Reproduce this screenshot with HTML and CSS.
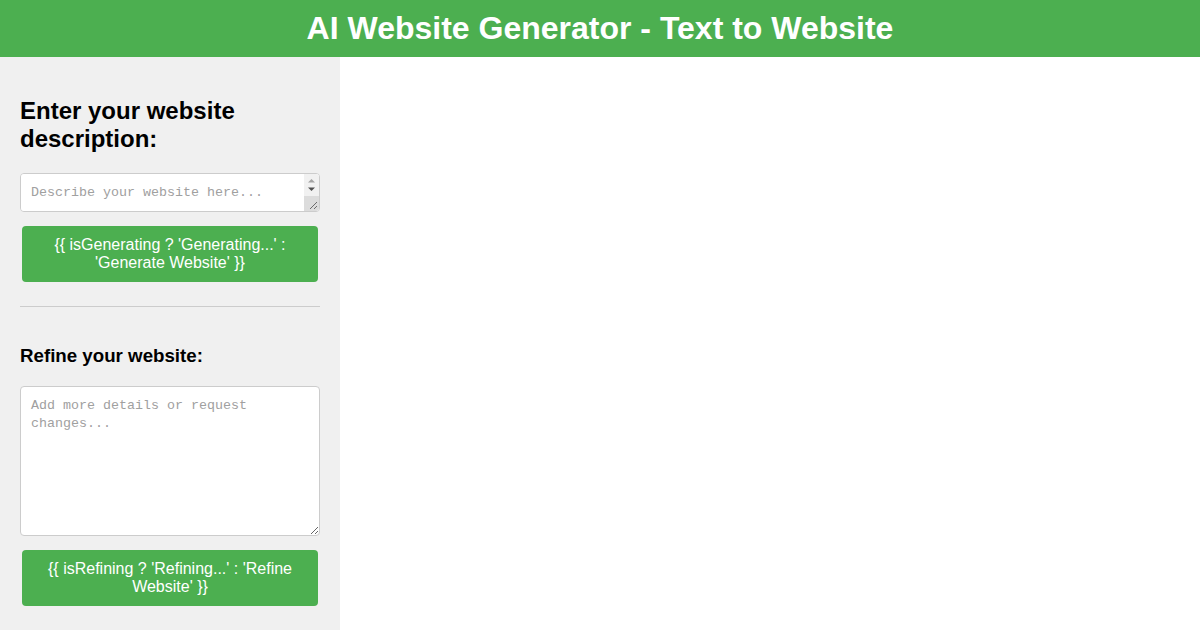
FILE: index.html
```html
<!DOCTYPE html>
<html lang="en">
<head>
    <meta charset="UTF-8">
    <meta name="viewport" content="width=device-width, initial-scale=1.0">
    <title>AI Website Generator</title>
    <link rel="stylesheet" href="styles.css">
</head>
<body>
    <div class="header">
        <h1>AI Website Generator - Text to Website</h1>
    </div>
    <div class="main">
        <div class="sidebar">
            <h2>Enter your website description:</h2>
            <div class="field">
                <textarea class="prompt" placeholder="Describe your website here..."></textarea>
                <!-- scrollbar of the one-row textarea -->
                <svg class="scrollbar" width="15" height="37" viewBox="0 0 15 37">
                    <rect x="0" y="0" width="15" height="37" fill="#f1f1f1"/>
                    <path d="M4 8.5 L7.5 5 L11 8.5 Z" fill="#a3a3a3"/>
                    <path d="M4 13.5 L7.5 17 L11 13.5 Z" fill="#505050"/>
                    <rect x="0" y="22" width="15" height="15" fill="#dcdcdc"/>
                    <path d="M6 35 L13 28 M10 35 L13 32" stroke="#6b6b6b" stroke-width="1"/>
                </svg>
            </div>
            <button class="button">{{ isGenerating ? 'Generating...' : 'Generate Website' }}</button>
            <hr>
            <h3>Refine your website:</h3>
            <textarea class="refine" placeholder="Add more details or request changes..."></textarea>
            <button class="button">{{ isRefining ? 'Refining...' : 'Refine Website' }}</button>
        </div>
        <div class="preview"></div>
    </div>
</body>
</html>
```

FILE: styles.css
```css
body {
    font-family: "Liberation Sans", Arial, sans-serif;
    margin: 0;
    padding: 0;
    height: 100vh;
    display: flex;
    flex-direction: column;
    overflow: hidden;
}
.header {
    background-color: #4caf50;
    color: #fff;
    text-align: center;
    padding: 10px;
}
.header h1 {
    margin: 0;
    font-size: 32px;
    line-height: 37px;
}
.main {
    flex: 1;
    display: flex;
}
.sidebar {
    width: 300px;
    padding: 20px;
    background-color: #f0f0f0;
}
.sidebar h2 {
    font-size: 24px;
    line-height: 28px;
    margin: 20px 0;
}
.sidebar h3 {
    font-size: 18.72px;
    line-height: 22px;
    margin: 0 0 19px;
}
.field {
    position: relative;
}
textarea {
    display: block;
    width: 100%;
    box-sizing: border-box;
    padding: 10px;
    border: 1px solid #ccc;
    border-radius: 4px;
    font-family: "Liberation Mono", "Courier New", monospace;
    font-size: 13.33px;
    line-height: 18px;
    background-color: #fff;
    margin: 0;
}
textarea::placeholder {
    color: #a0a0a0;
}
.prompt {
    height: 39px;
    padding-right: 25px;
}
.scrollbar {
    position: absolute;
    top: 1px;
    right: 1px;
    border-top-right-radius: 3px;
    border-bottom-right-radius: 3px;
}
.refine {
    height: 150px;
}
.button {
    display: block;
    width: 296px;
    margin: 14px 2px 0;
    padding: 10px 20px;
    background-color: #4caf50;
    color: #fff;
    border: none;
    border-radius: 4px;
    font-family: "Liberation Sans", Arial, sans-serif;
    font-size: 16px;
    line-height: 18px;
    cursor: pointer;
}
hr {
    border: none;
    border-top: 1px solid #ccc;
    margin: 24px 0 38px;
}
.preview {
    flex: 1;
    background-color: #fff;
}
```
